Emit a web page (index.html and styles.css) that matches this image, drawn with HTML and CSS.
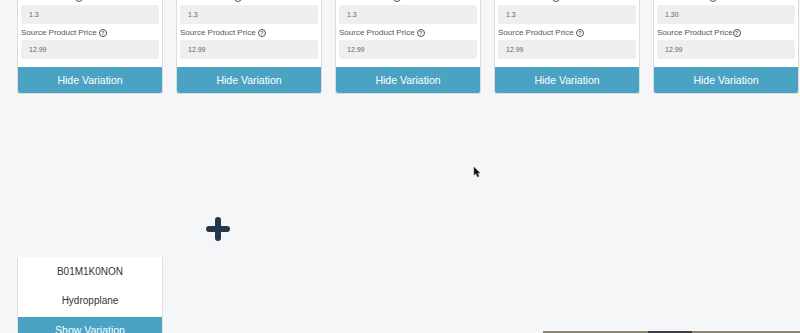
FILE: index.html
```html
<!DOCTYPE html>
<html lang="en">
<head>
    <meta charset="UTF-8">
    <meta name="viewport" content="width=device-width, initial-scale=1.0">
    <title>Variations</title>
    <link rel="stylesheet" href="styles.css">
</head>
<body>
    <div class="cards">
        <div class="card">
            <div class="card-body">
                <div class="label">Final Lot Profit <span class="help">?</span></div>
                <div class="input">1.3</div>
                <div class="label">Source Product Price <span class="help">?</span></div>
                <div class="input">12.99</div>
            </div>
            <button class="toggle">Hide Variation</button>
        </div>
        <div class="card">
            <div class="card-body">
                <div class="label">Final Lot Profit <span class="help">?</span></div>
                <div class="input">1.3</div>
                <div class="label">Source Product Price <span class="help">?</span></div>
                <div class="input">12.99</div>
            </div>
            <button class="toggle">Hide Variation</button>
        </div>
        <div class="card">
            <div class="card-body">
                <div class="label">Final Lot Profit <span class="help">?</span></div>
                <div class="input">1.3</div>
                <div class="label">Source Product Price <span class="help">?</span></div>
                <div class="input">12.99</div>
            </div>
            <button class="toggle">Hide Variation</button>
        </div>
        <div class="card">
            <div class="card-body">
                <div class="label">Final Lot Profit <span class="help">?</span></div>
                <div class="input">1.3</div>
                <div class="label">Source Product Price <span class="help">?</span></div>
                <div class="input">12.99</div>
            </div>
            <button class="toggle">Hide Variation</button>
        </div>
        <div class="card">
            <div class="card-body">
                <div class="label">Final Lot Profit<span class="help">?</span></div>
                <div class="input">1.30</div>
                <div class="label">Source Product Price<span class="help">?</span></div>
                <div class="input">12.99</div>
            </div>
            <button class="toggle">Hide Variation</button>
        </div>
    </div>

    <div class="add-row">
        <svg class="add-icon" width="26" height="24" viewBox="0 0 26 24">
            <path d="M13 3 V21 M4 12 H22" stroke="#22384d" stroke-width="6" stroke-linecap="round" fill="none"/>
        </svg>
    </div>

    <div class="variants">
        <div class="variant">
            <div class="variant-asin">B01M1K0NON</div>
            <div class="variant-name">Hydropplane</div>
            <button class="toggle">Show Variation</button>
        </div>
    </div>

    <svg class="cursor" width="8" height="12" viewBox="0 0 8 12">
        <path d="M1 1 L1 9 L3 7.5 L4.5 11 L6 10.3 L4.6 7 L7 7 Z" fill="#111" stroke="#555" stroke-width="0.5"/>
    </svg>

    <div class="dock"><span class="dock-dark"></span></div>
</body>
</html>
```

FILE: styles.css
```css
body {
    margin: 0;
    height: 333px;
    overflow: hidden;
    background-color: #f4f6f8;
    font-family: "Liberation Sans", Arial, sans-serif;
    position: relative;
}
.cards {
    display: flex;
    gap: 13px;
    padding-left: 17px;
    margin-top: -11px;
}
.card {
    width: 146px;
    background-color: #fff;
    border: 1px solid #dcdcdc;
    border-top: none;
    border-radius: 0 0 3px 3px;
    box-sizing: border-box;
    display: flex;
    flex-direction: column;
}
.card-body {
    padding: 0 3px 8px;
}
.label {
    font-size: 8px;
    line-height: 11px;
    padding-top: 3px;
    margin-bottom: 2px;
    color: #555;
    white-space: nowrap;
}
.help {
    display: inline-block;
    width: 6px;
    height: 6px;
    border: 1px solid #555;
    border-radius: 50%;
    font-size: 5px;
    line-height: 6px;
    text-align: center;
    font-weight: bold;
    vertical-align: 0;
}
.input {
    height: 19px;
    line-height: 19px;
    background-color: #efefef;
    border-radius: 2px;
    padding-left: 8px;
    font-size: 7px;
    color: #666;
}
.toggle {
    display: block;
    width: 100%;
    height: 26px;
    border: none;
    border-radius: 0 0 2px 2px;
    background-color: #4ba3c4;
    color: #fff;
    font-family: "Liberation Sans", Arial, sans-serif;
    font-size: 10.5px;
    padding: 0;
    margin: 0;
}
.add-row {
    padding-left: 205px;
    margin-top: 123px;
    height: 24px;
}
.add-icon {
    display: block;
}
.variants {
    display: flex;
    padding-left: 17px;
    margin-top: 16px;
}
.variant {
    width: 146px;
    background-color: #fff;
    border-left: 1px solid #e2e2e2;
    border-right: 1px solid #e2e2e2;
    box-sizing: border-box;
    padding-top: 8px;
    text-align: center;
    font-size: 10px;
    color: #333;
}
.variant-asin,
.variant-name {
    line-height: 14px;
}
.variant-asin {
    margin-bottom: 15px;
}
.variant-name {
    margin-bottom: 9px;
}
.cursor {
    position: absolute;
    left: 473px;
    top: 166px;
}
.dock {
    position: absolute;
    left: 543px;
    right: 0;
    bottom: 0;
    height: 2px;
    background-color: #8a8372;
}
.dock-dark {
    position: absolute;
    left: 105px;
    width: 44px;
    top: 0;
    bottom: 0;
    background-color: #3c3d40;
}
```
